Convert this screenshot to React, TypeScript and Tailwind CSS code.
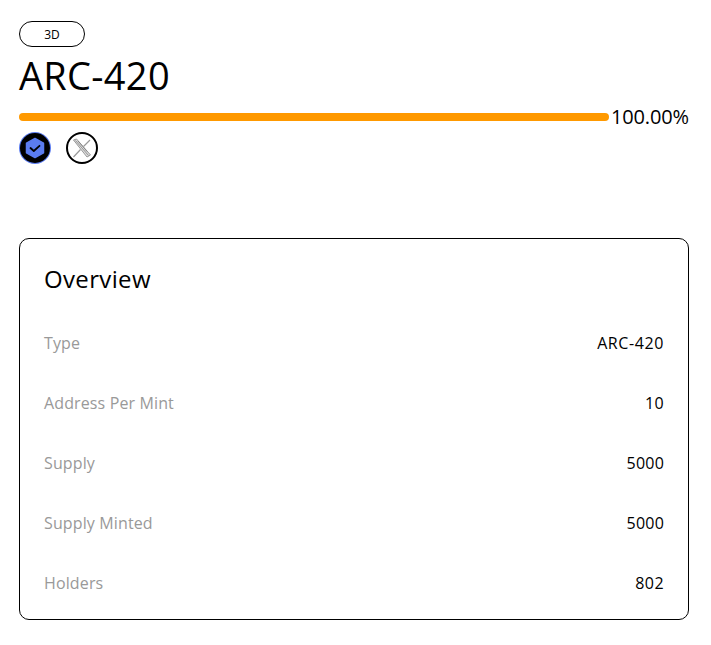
const rows = [
  { label: 'Type', value: 'ARC-420', valueClass: 'tracking-[0.6px]' },
  { label: 'Address Per Mint', value: '10', valueClass: 'tracking-[0.3px]' },
  { label: 'Supply', value: '5000', valueClass: 'tracking-[0.2px]' },
  { label: 'Supply Minted', value: '5000', valueClass: 'tracking-[0.2px]' },
  { label: 'Holders', value: '802', valueClass: 'tracking-[0.45px]' },
];

function VerifiedIcon() {
  return (
    <svg viewBox="0 0 32 32" className="h-8 w-8">
      <circle cx="16" cy="16" r="16" fill="#5b7cf0" />
      <circle cx="16" cy="16" r="15" fill="#000" />
      <path d="M16 6.5 24.5 11.2 24.5 20.8 16 25.5 7.5 20.8 7.5 11.2Z" fill="#5b7cf0" stroke="#5b7cf0" strokeWidth="1.5" strokeLinejoin="round" />
      <path d="M11.5 16 14.8 19 20.5 13.8" fill="none" stroke="#000" strokeWidth="1.8" strokeLinecap="round" strokeLinejoin="round" />
    </svg>
  );
}

function XIcon() {
  return (
    <svg viewBox="0 0 32 32" className="h-8 w-8">
      <circle cx="16" cy="16" r="15" fill="#fff" stroke="#000" strokeWidth="2" />
      <path d="M7.5 8 10.5 7 24.5 23 21 25Z" fill="#ddd" stroke="#999" strokeWidth="1" strokeLinejoin="round" />
      <path d="M9.5 8.5 22.5 23.5M12 9 21 19.5" fill="none" stroke="#777" strokeWidth="0.7" />
      <path d="M24 8 17.5 14.5M14.5 17.5 7.5 25" fill="none" stroke="#999" strokeWidth="1.2" />
    </svg>
  );
}

export default function App() {
  return (
    <div className="min-h-[645px] bg-white px-[19px] pt-[21px] pr-[22px] font-['Open_Sans',sans-serif] text-black">
      <div className="flex h-[26px] w-[66px] items-center justify-center rounded-full border border-black pt-[1px] text-[12px]">
        3D
      </div>
      <h1 className="mt-[3px] text-[38px] leading-[50px] tracking-[0.3px]">ARC-420</h1>
      <div className="mt-[5px] flex h-[24px] items-center">
        <div className="h-2 w-[590px] rounded-full bg-[#ff9900]" />
        <span className="ml-[2px] whitespace-nowrap text-[20px] leading-[24px] tracking-[-0.15px]">100.00%</span>
      </div>
      <div className="mt-[3px] flex gap-[15px]">
        <VerifiedIcon />
        <XIcon />
      </div>
      <div className="mt-[74px] rounded-[10px] border border-black px-6 pt-[20px] pb-[6px]">
        <h2 className="text-[24px] leading-[40px] tracking-[0.35px]">Overview</h2>
        <div className="mt-[14px]">
          {rows.map((row) => (
            <div key={row.label} className="flex h-[60px] items-center justify-between text-[16px]">
              <span className="tracking-[0.13px] text-[#999]">{row.label}</span>
              <span className={row.valueClass}>{row.value}</span>
            </div>
          ))}
        </div>
      </div>
    </div>
  );
}
